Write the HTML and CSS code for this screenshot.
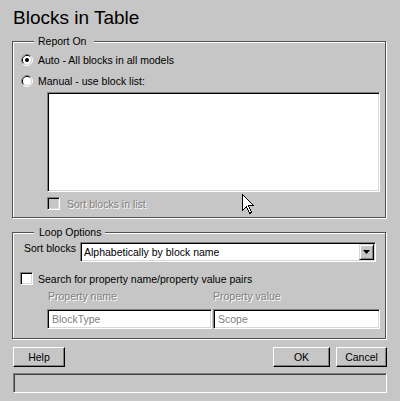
FILE: index.html
```html
<!DOCTYPE html>
<html>
<head>
<meta charset="utf-8">
<link rel="stylesheet" href="styles.css">
</head>
<body>
<div class="dialog">
  <h1 class="title">Blocks in Table</h1>

  <div class="group group-report">
    <span class="legend legend-report">Report On</span>
    <div class="radio-row row-auto">
      <svg class="radio" width="12" height="12" viewBox="0 0 12 12">
        <path d="M2.11 9.89 A5.5 5.5 0 0 1 9.89 2.11" fill="none" stroke="#808080"/>
        <path d="M9.89 2.11 A5.5 5.5 0 0 1 2.11 9.89" fill="none" stroke="#fff"/>
        <path d="M2.82 9.18 A4.5 4.5 0 0 1 9.18 2.82" fill="none" stroke="#000"/>
        <path d="M9.18 2.82 A4.5 4.5 0 0 1 2.82 9.18" fill="none" stroke="#d8d8d8"/>
        <circle cx="6" cy="6" r="4" fill="#fff"/>
        <circle cx="6" cy="6" r="2" fill="#000"/>
      </svg>
      <span class="lbl">Auto - All blocks in all models</span>
    </div>
    <div class="radio-row row-manual">
      <svg class="radio" width="12" height="12" viewBox="0 0 12 12">
        <path d="M2.11 9.89 A5.5 5.5 0 0 1 9.89 2.11" fill="none" stroke="#808080"/>
        <path d="M9.89 2.11 A5.5 5.5 0 0 1 2.11 9.89" fill="none" stroke="#fff"/>
        <path d="M2.82 9.18 A4.5 4.5 0 0 1 9.18 2.82" fill="none" stroke="#000"/>
        <path d="M9.18 2.82 A4.5 4.5 0 0 1 2.82 9.18" fill="none" stroke="#d8d8d8"/>
        <circle cx="6" cy="6" r="4" fill="#fff"/>
      </svg>
      <span class="lbl">Manual - use block list:</span>
    </div>
    <div class="listbox"></div>
    <div class="check-row sort-list-row">
      <span class="checkbox checkbox-disabled"></span>
      <span class="lbl dis">Sort blocks in list</span>
    </div>
  </div>

  <div class="group group-loop">
    <span class="legend legend-loop">Loop Options</span>
    <div class="sort-row">
      <span class="sort-label">Sort blocks</span>
      <div class="select">
        <span class="select-text">Alphabetically by block name</span>
        <span class="select-btn">
          <svg width="7" height="4" viewBox="0 0 7 4"><path d="M0 0H7L3.5 4Z" fill="#000"/></svg>
        </span>
      </div>
    </div>
    <div class="check-row search-row">
      <span class="checkbox"></span>
      <span class="lbl">Search for property name/property value pairs</span>
    </div>
    <div class="prop-grid">
      <span class="dis prop-name">Property name</span>
      <span class="dis prop-value">Property value</span>
      <div class="field">BlockType</div>
      <div class="field">Scope</div>
    </div>
  </div>

  <div class="buttons">
    <div class="btn btn-help">Help</div>
    <div class="btn btn-ok">OK</div>
    <div class="btn btn-cancel">Cancel</div>
  </div>
  <div class="status"></div>

  <svg class="cursor" width="13" height="21" viewBox="0 0 13 21">
    <path d="M0.5 0.5 V16.5 L4.5 12.5 L7.5 19.5 L9.5 18.5 L6.5 11.5 H11.5 Z" fill="#fff" stroke="#000" stroke-width="1" shape-rendering="crispEdges"/>
  </svg>
</div>
</body>
</html>
```
FILE: styles.css
```css
html, body {
  margin: 0;
  padding: 0;
  background: #c6c6c6;
}

body {
  font-family: "Liberation Sans", Arial, sans-serif;
  font-size: 10.5px;
  color: #000;
}

.dialog {
  position: relative;
  width: 400px;
  height: 401px;
  padding-left: 12px;
  box-sizing: border-box;
}

.title {
  margin: 6px 0 11px 1px;
  height: 24px;
  line-height: 24px;
  font-size: 19px;
  font-weight: normal;
}

.group {
  position: relative;
  width: 374px;
  box-sizing: border-box;
  border: 1px solid #505050;
  box-shadow: inset 1px 1px 0 #fff, 1px 1px 0 #fff;
  padding-left: 8px;
}

.group-report {
  padding-top: 12px;
  padding-bottom: 7px;
}

.group-loop {
  margin-top: 14px;
  padding-top: 9px;
  padding-bottom: 9px;
}

.legend {
  position: absolute;
  top: -7px;
  left: 21px;
  line-height: 12px;
  background: #c6c6c6;
  padding: 0 8px 0 4px;
}

.legend-loop {
  padding: 0 4px 0 5px;
}

.radio-row,
.check-row {
  display: flex;
  align-items: center;
  height: 13px;
}

.radio-row {
  height: 12px;
}

.radio {
  display: block;
  flex: none;
}

.lbl {
  line-height: 12px;
  margin-left: 5px;
  white-space: nowrap;
}

.row-manual {
  margin-top: 9px;
}

.listbox {
  margin: 5px 0 0 26px;
  width: 333px;
  height: 100px;
  box-sizing: border-box;
  background: #fff;
  border: 1px solid;
  border-color: #808080 #fff #fff #808080;
  box-shadow: inset 1px 1px 0 #000, inset -1px -1px 0 #d8d8d8;
}

.sort-list-row {
  margin: 5px 0 0 26px;
}

.checkbox {
  flex: none;
  width: 13px;
  height: 13px;
  box-sizing: border-box;
  background: #fff;
  border: 1px solid;
  border-color: #808080 #fff #fff #808080;
  box-shadow: inset 1px 1px 0 #000, inset -1px -1px 0 #d8d8d8;
}

.checkbox-disabled {
  background: #c6c6c6;
}

.dis {
  color: #808080;
  text-shadow: 1px 1px 0 #fff;
}

.sort-list-row .lbl {
  margin-left: 7px;
}

.sort-row {
  display: flex;
  align-items: flex-start;
  height: 20px;
}

.sort-label {
  width: 59px;
  padding-left: 3px;
  box-sizing: border-box;
  line-height: 12px;
  white-space: nowrap;
}

.select {
  position: relative;
  display: flex;
  align-items: stretch;
  width: 296px;
  height: 20px;
  box-sizing: border-box;
  background: #fff;
  border: 1px solid;
  border-color: #808080 #fff #fff #808080;
  box-shadow: inset 1px 1px 0 #000, inset -1px -1px 0 #d8d8d8;
  padding: 1px;
}

.select-text {
  flex: 1;
  line-height: 16px;
  padding-left: 2px;
  white-space: nowrap;
}

.select-btn {
  flex: none;
  width: 15px;
  box-sizing: border-box;
  background: #c6c6c6;
  border: 1px solid;
  border-color: #d8d8d8 #000 #000 #d8d8d8;
  box-shadow: inset 1px 1px 0 #fff, inset -1px -1px 0 #808080;
  display: flex;
  align-items: center;
  justify-content: center;
}

.select-btn svg {
  display: block;
}

.search-row {
  margin-top: 10px;
  margin-left: -1px;
}

.prop-grid {
  display: grid;
  grid-template-columns: 165px 167px;
  column-gap: 1px;
  row-gap: 7px;
  margin: 5px 0 0 26px;
}

.prop-name,
.prop-value {
  line-height: 12px;
  white-space: nowrap;
}

.prop-name {
  padding-left: 1px;
}

.field {
  height: 20px;
  box-sizing: border-box;
  background: #fff;
  border: 1px solid;
  border-color: #808080 #fff #fff #808080;
  box-shadow: inset 1px 1px 0 #000, inset -1px -1px 0 #d8d8d8;
  color: #808080;
  line-height: 16px;
  padding: 1px 4px;
  white-space: nowrap;
}

.buttons {
  display: flex;
  margin: 8px 0 0 1px;
  width: 374px;
}

.btn {
  height: 20px;
  box-sizing: border-box;
  border: 1px solid;
  border-color: #fff #000 #000 #fff;
  box-shadow: inset -1px -1px 0 #808080;
  text-align: center;
  line-height: 18px;
}

.btn-help {
  width: 52px;
}

.btn-ok {
  width: 57px;
  margin-left: auto;
}

.btn-cancel {
  width: 51px;
  margin-left: 6px;
}

.status {
  margin: 6px 0 0 1px;
  width: 374px;
  height: 20px;
  box-sizing: border-box;
  border: 1px solid;
  border-color: #808080 #fff #fff #808080;
  box-shadow: inset 1px 1px 0 #404040;
}

.cursor {
  position: absolute;
  left: 242px;
  top: 188px;
}
```
